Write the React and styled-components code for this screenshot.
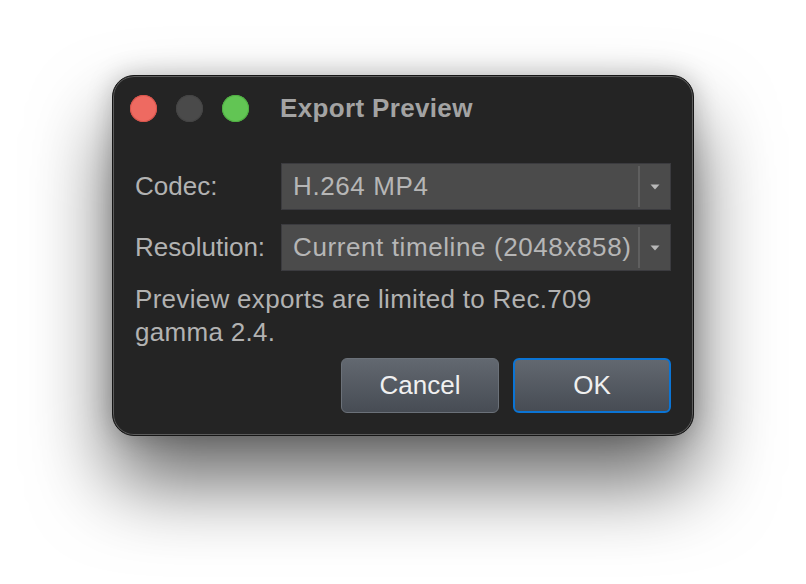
import React from "react";
import styled, { createGlobalStyle } from "styled-components";

const GlobalStyle = createGlobalStyle`
  html, body {
    margin: 0;
    padding: 0;
    background: #ffffff;
  }
  body {
    font-family: "Liberation Sans", Arial, sans-serif;
  }
`;

const Page = styled.div`
  width: 806px;
  height: 584px;
  padding-top: 75px;
  box-sizing: border-box;
  display: flex;
  justify-content: center;
  align-items: flex-start;
`;

const Window = styled.div`
  width: 582px;
  box-sizing: border-box;
  background: #242424;
  border: 1px solid #161616;
  border-radius: 22px;
  box-shadow: inset 0 0 0 1px #5c5c5c, 0 46px 80px rgba(0, 0, 0, 0.6),
    0 0 26px rgba(0, 0, 0, 0.22);
  padding: 0 22px 22px 22px;
  font-size: 26px;
`;

const TitleBar = styled.div`
  display: flex;
  align-items: center;
  height: 64px;
  margin-left: -5px;
`;

const Lights = styled.div`
  display: flex;
  gap: 19px;
  margin-right: 31px;
`;

const Light = styled.span`
  width: 27px;
  height: 27px;
  border-radius: 50%;
  background: ${(p) => p.color};
  box-shadow: inset 0 0 0 1px ${(p) => p.edge};
`;

const Title = styled.div`
  font-weight: 700;
  color: #a3a3a3;
  letter-spacing: 0.35px;
`;

const Form = styled.div`
  display: grid;
  grid-template-columns: 146px 1fr;
  row-gap: 14px;
  align-items: center;
  margin-top: 23px;
`;

const Label = styled.div`
  color: #b2b2b2;
`;

const Combo = styled.div`
  display: flex;
  height: 47px;
  box-sizing: border-box;
  background: #4b4b4b;
  border: 1px solid #3b3b3f;
`;

const ComboValue = styled.div`
  flex: 1;
  display: flex;
  align-items: center;
  padding-left: 11px;
  color: #b6b6b6;
  letter-spacing: 0.6px;
  white-space: nowrap;
  overflow: hidden;
`;

const ComboArrow = styled.div`
  width: 30px;
  border-left: 2px solid #5f5f5f;
  margin: 2px 0;
  display: flex;
  align-items: center;
  justify-content: center;
`;

const Note = styled.p`
  margin: 12px 0 0 0;
  color: #b2b2b2;
  line-height: 33px;
  letter-spacing: 0.3px;
`;

const Buttons = styled.div`
  display: flex;
  justify-content: flex-end;
  gap: 14px;
  margin-top: 9px;
`;

const Button = styled.button`
  width: 158px;
  height: 55px;
  box-sizing: border-box;
  border-radius: 6px;
  border: ${(p) => (p.primary ? "2px solid #0b74d4" : "1px solid #6b7179")};
  background: linear-gradient(#626870, #474c54);
  color: #f0f0f0;
  font-family: "Liberation Sans", Arial, sans-serif;
  font-size: 26px;
  padding: 0;
`;

const Arrow = () => (
  <svg width="10" height="6" viewBox="0 0 10 6">
    <path d="M0.5 0.5 H9.5 L5 5.5 Z" fill="#b8b8b8" />
  </svg>
);

const Select = ({ value }) => (
  <Combo>
    <ComboValue>{value}</ComboValue>
    <ComboArrow>
      <Arrow />
    </ComboArrow>
  </Combo>
);

export default function App() {
  return (
    <>
      <GlobalStyle />
      <Page>
        <Window>
          <TitleBar>
            <Lights>
              <Light color="#ee6a61" edge="#d8544b" />
              <Light color="#4a4a4a" edge="#444444" />
              <Light color="#62c554" edge="#4fae42" />
            </Lights>
            <Title>Export Preview</Title>
          </TitleBar>
          <Form>
            <Label>Codec:</Label>
            <Select value="H.264 MP4" />
            <Label>Resolution:</Label>
            <Select value="Current timeline (2048x858)" />
          </Form>
          <Note>
            Preview exports are limited to Rec.709
            <br />
            gamma 2.4.
          </Note>
          <Buttons>
            <Button>Cancel</Button>
            <Button primary>OK</Button>
          </Buttons>
        </Window>
      </Page>
    </>
  );
}
